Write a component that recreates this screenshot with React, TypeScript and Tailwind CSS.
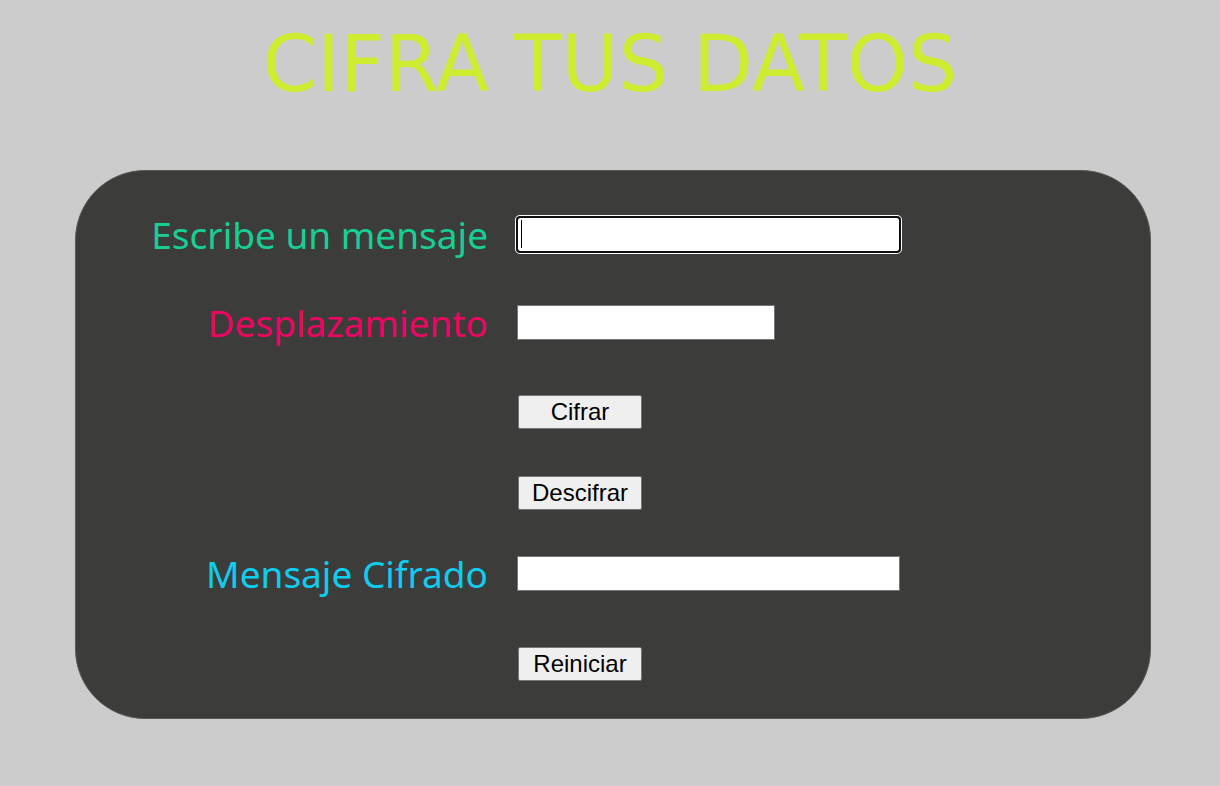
import React from 'react';

const labelFont = { fontFamily: '"Comic Sans MS", "Noto Sans", "DejaVu Sans", sans-serif' };

const Label: React.FC<{ text: string; color: string }> = ({ text, color }) => (
  <div className={`w-[412px] text-right text-[37px] leading-none ${color}`} style={labelFont}>
    {text}
  </div>
);

const Btn: React.FC<{ children: React.ReactNode }> = ({ children }) => (
  <button className="ml-px h-[34px] w-[124px] rounded-[2px] border border-[#767676] bg-[#efefef] text-[24px] leading-none text-black font-['Liberation_Sans',Arial,sans-serif]">
    {children}
  </button>
);

export default function App() {
  return (
    <div className="min-h-[786px] w-full bg-[#cccccc] pt-[25px]">
      <h1 className="text-center text-[78px] leading-none text-[#cfec30] font-['DejaVu_Sans',Verdana,sans-serif]">
        CIFRA TUS DATOS
      </h1>

      <div className="ml-[75px] mt-[67px] flex h-[549px] w-[1076px] flex-col rounded-[70px] border border-[#5a5955] bg-[#3c3c3a]">
        {/* mensaje */}
        <div className="mt-[46px] flex h-[35px] items-center">
          <Label text="Escribe un mensaje" color="text-[#17cf94]" />
          <div className="relative ml-[29px]">
            <input
              type="text"
              className="block h-[35px] w-[383px] rounded-[3px] border border-[#767676] bg-white outline-2 -outline-offset-1 outline-[#101010] shadow-[0_0_0_2px_white]"
            />
            <span className="absolute left-[4px] top-[3px] h-[28px] w-px bg-black" />
          </div>
        </div>

        {/* desplazamiento */}
        <div className="mt-[53px] flex h-[35px] items-center">
          <Label text="Desplazamiento" color="text-[#ea0661]" />
          <input
            type="text"
            className="ml-[29px] block h-[35px] w-[258px] border border-[#767676] bg-white outline-none"
          />
        </div>

        <div className="mt-[54px] flex h-[35px] items-center">
          <div className="w-[412px]" />
          <div className="ml-[29px]">
            <Btn>Cifrar</Btn>
          </div>
        </div>

        <div className="mt-[46px] flex h-[35px] items-center">
          <div className="w-[412px]" />
          <div className="ml-[29px]">
            <Btn>Descifrar</Btn>
          </div>
        </div>

        {/* resultado */}
        <div className="mt-[46px] flex h-[35px] items-center">
          <Label text="Mensaje Cifrado" color="text-[#0fcdf0]" />
          <input
            type="text"
            readOnly
            className="ml-[29px] block h-[35px] w-[383px] border border-[#767676] bg-white outline-none"
          />
        </div>

        <div className="mt-[55px] flex h-[35px] items-center">
          <div className="w-[412px]" />
          <div className="ml-[29px]">
            <Btn>Reiniciar</Btn>
          </div>
        </div>
      </div>
    </div>
  );
}
